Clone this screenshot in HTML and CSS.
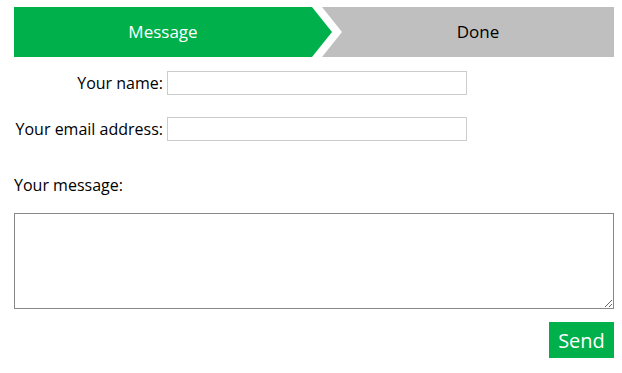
FILE: index.html
```html
<!DOCTYPE html>
<html lang="en">
<head>
  <meta charset="UTF-8">
  <meta name="viewport" content="width=device-width, initial-scale=1.0">
  <title>Contact</title>
  <link rel="stylesheet" href="styles.css">
</head>
<body>
  <div class="steps">
    <div class="step active">Message</div>
    <div class="step next">Done</div>
  </div>

  <form class="contact">
    <div class="row">
      <label for="name">Your name:</label>
      <input type="text" id="name">
    </div>
    <div class="row">
      <label for="email">Your email address:</label>
      <input type="text" id="email">
    </div>
    <label class="msg-label" for="message">Your message:</label>
    <textarea id="message"></textarea>
    <div class="actions">
      <button type="button">Send</button>
    </div>
  </form>
</body>
</html>
```

FILE: styles.css
```css
body {
  margin: 7px 8px 0 14px;
  font-family: "Open Sans", sans-serif;
  font-size: 16px;
  color: #000;
  background: #fff;
}
.steps {
  display: flex;
  width: 600px;
  height: 50px;
}
.step {
  line-height: 50px;
  font-size: 17px;
  text-align: center;
}
.active {
  width: 318px;
  padding-right: 20px;
  box-sizing: border-box;
  background: #00b04b;
  color: #fff;
  clip-path: polygon(0 0, 298px 0, 100% 50%, 298px 100%, 0 100%);
}
.next {
  flex: 1;
  margin-left: -10px;
  padding-left: 20px;
  background: #bfbfbf;
  clip-path: polygon(0 0, 100% 0, 100% 100%, 0 100%, 20px 50%);
}
.contact {
  width: 600px;
  padding-top: 14px;
}
.row {
  display: flex;
  align-items: center;
  gap: 4px;
  margin-bottom: 22px;
}
.row label {
  width: 149px;
  text-align: right;
}
.row input {
  width: 300px;
  height: 24px;
  box-sizing: border-box;
  border: 1px solid #cccccc;
  margin: 0;
  padding: 2px 4px;
  font: inherit;
}
.msg-label {
  display: block;
  margin-top: 33px;
  line-height: 22px;
}
textarea {
  display: block;
  width: 600px;
  height: 96px;
  box-sizing: border-box;
  margin: 17px 0 0;
  border: 1px solid #888;
  font: inherit;
}
.actions {
  display: flex;
  justify-content: flex-end;
  margin-top: 13px;
}
button {
  width: 65px;
  height: 36px;
  padding: 0;
  background: #00b04b;
  color: #fff;
  border: none;
  font-family: "Open Sans", sans-serif;
  font-size: 20px;
  cursor: pointer;
}
```
